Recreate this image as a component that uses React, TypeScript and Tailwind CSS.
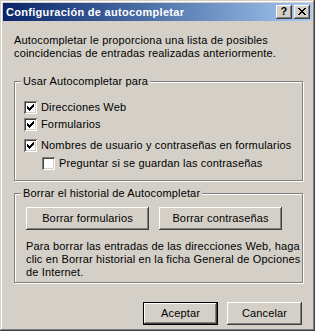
import React from "react";

const raised =
  "shadow-[inset_-1px_-1px_0_#404040,inset_1px_1px_0_#ffffff,inset_-2px_-2px_0_#808080]";

function CheckBox({ checked }: { checked: boolean }) {
  return (
    <div className="w-[13px] h-[13px] shrink-0 bg-white shadow-[inset_1px_1px_0_#808080,inset_-1px_-1px_0_#ffffff,inset_2px_2px_0_#404040,inset_-2px_-2px_0_#d4d0c8]">
      {checked && (
        <svg width="13" height="13" viewBox="0 0 13 13" shapeRendering="crispEdges" className="block">
          <path
            fill="#000"
            d="M9 3h1v1h-1z M8 4h2v1h-2z M3 5h1v1h-1z M7 5h3v1h-3z M3 6h2v1h-2z M6 6h3v1h-3z M3 7h5v1h-5z M4 8h3v1h-3z M5 9h1v1h-1z"
          />
        </svg>
      )}
    </div>
  );
}

function Row({ checked, label, className }: { checked: boolean; label: string; className: string }) {
  return (
    <div className={"flex items-center h-[13px] gap-[4px] " + className}>
      <CheckBox checked={checked} />
      <span className="leading-[13px] whitespace-nowrap">{label}</span>
    </div>
  );
}

function Group({ label, className, children }: { label: string; className: string; children: React.ReactNode }) {
  return (
    <div
      className={
        "relative w-[289px] border border-[#808080] shadow-[1px_1px_0_#ffffff,inset_1px_1px_0_#ffffff] " + className
      }
    >
      <span className="absolute left-[6px] top-[-7px] px-[2px] bg-[#d4d0c8] leading-[13px] whitespace-nowrap">
        {label}
      </span>
      {children}
    </div>
  );
}

export default function App() {
  return (
    <div
      className="w-[315px] h-[331px] bg-[#d4d0c8] p-[3px] text-[11px] tracking-[0.15px] text-black shadow-[inset_-1px_-1px_0_#404040,inset_1px_1px_0_#d4d0c8,inset_-2px_-2px_0_#808080,inset_2px_2px_0_#ffffff]"
      style={{ fontFamily: '"Liberation Sans", Arial, sans-serif' }}
    >
      <div className="h-[18px] flex items-center justify-between pl-[3px] pr-[2px] bg-gradient-to-r from-[#0a246a] to-[#a6caf0]">
        <span className="text-white font-bold text-[11px] tracking-[0.3px] leading-[13px] whitespace-nowrap">
          Configuración de autocompletar
        </span>
        <div className="flex gap-[2px]">
          <div className={"w-[16px] h-[14px] bg-[#d4d0c8] flex items-center justify-center " + raised}>
            <span className="font-bold text-[11px] leading-[11px] mt-[-1px]">?</span>
          </div>
          <div className={"w-[16px] h-[14px] bg-[#d4d0c8] flex items-start justify-start " + raised}>
            <svg width="8" height="7" viewBox="0 0 8 7" shapeRendering="crispEdges" className="block ml-[4px] mt-[3px]">
              <path
                fill="#000"
                d="M0 0h2v1h-2z M6 0h2v1h-2z M1 1h2v1h-2z M5 1h2v1h-2z M2 2h4v1h-4z M3 3h2v1h-2z M2 4h4v1h-4z M1 5h2v1h-2z M5 5h2v1h-2z M0 6h2v1h-2z M6 6h2v1h-2z"
              />
            </svg>
          </div>
        </div>
      </div>

      <div className="pl-[11px] flex flex-col">
        <p className="mt-[13px] leading-[13px]">
          Autocompletar le proporciona una lista de posibles
          <br />
          coincidencias de entradas realizadas anteriormente.
        </p>

        <Group label="Usar Autocompletar para" className="mt-[21px] h-[100px] pl-[9px]">
          <Row checked label="Direcciones Web" className="mt-[19px]" />
          <Row checked label="Formularios" className="mt-[4px]" />
          <Row checked label="Nombres de usuario y contraseñas en formularios" className="mt-[8px]" />
          <Row checked={false} label="Preguntar si se guardan las contraseñas" className="mt-[5px] ml-[18px]" />
        </Group>

        <Group label="Borrar el historial de Autocompletar" className="mt-[12px] h-[90px] pl-[11px]">
          <div className="flex gap-[10px] mt-[13px]">
            <div className={"w-[123px] h-[23px] flex items-center justify-center leading-[13px] " + raised}>
              Borrar formularios
            </div>
            <div className={"w-[123px] h-[23px] flex items-center justify-center leading-[13px] " + raised}>
              Borrar contraseñas
            </div>
          </div>
          <p className="mt-[10px] leading-[13px] whitespace-nowrap">
            Para borrar las entradas de las direcciones Web, haga
            <br />
            clic en Borrar historial en la ficha General de Opciones
            <br />
            de Internet.
          </p>
        </Group>

        <div className="w-[288px] flex justify-end gap-[9px] mt-[19px]">
          <div className="w-[75px] h-[23px] flex items-center justify-center leading-[13px] shadow-[inset_0_0_0_1px_#000000,inset_-2px_-2px_0_#404040,inset_2px_2px_0_#ffffff,inset_-3px_-3px_0_#808080]">
            Aceptar
          </div>
          <div className={"w-[75px] h-[23px] flex items-center justify-center leading-[13px] " + raised}>
            Cancelar
          </div>
        </div>
      </div>
    </div>
  );
}
